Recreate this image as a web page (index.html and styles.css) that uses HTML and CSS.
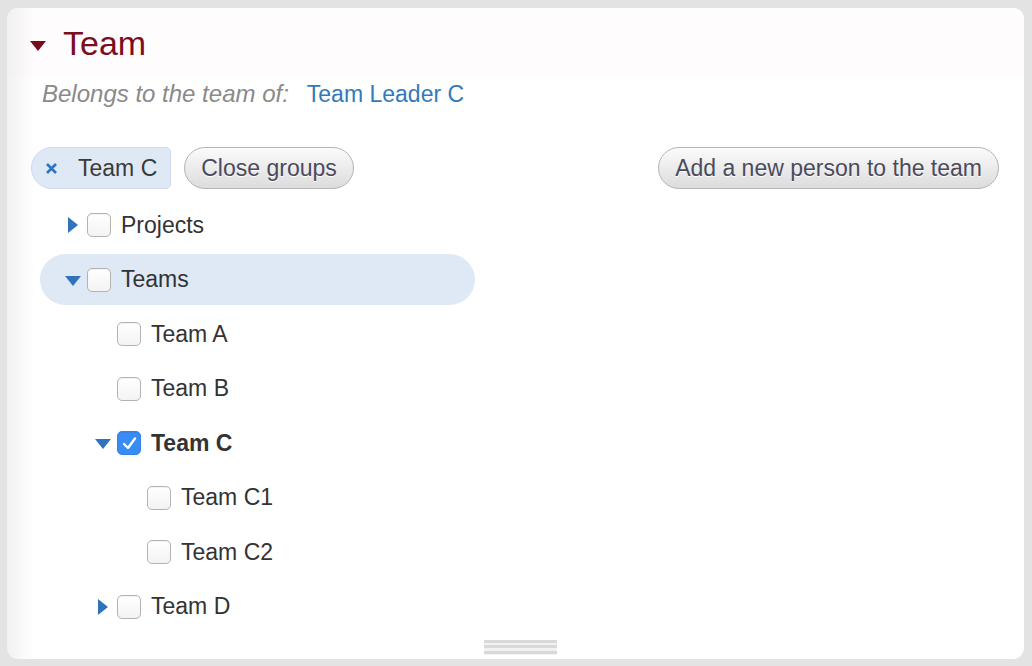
FILE: index.html
```html
<!DOCTYPE html>
<html>
<head>
<meta charset="utf-8">
<link rel="stylesheet" href="styles.css">
</head>
<body>
<div class="panel">
  <div class="header">
    <span class="tri-title"></span>
    <h1 class="title">Team</h1>
  </div>
  <div class="belongs">
    <span class="belongs-label">Belongs to the team of:</span>
    <a class="belongs-link">Team Leader C</a>
  </div>
  <div class="toolbar">
    <span class="tag">
      <svg class="tag-x" width="13" height="13" viewBox="0 0 13 13"><path d="M2 2 L11 11 M11 2 L2 11" stroke="#2f74c0" stroke-width="2.7" stroke-linecap="butt"/></svg>
      <span class="tag-text">Team C</span>
    </span>
    <button class="btn">Close groups</button>
    <span class="spacer"></span>
    <button class="btn">Add a new person to the team</button>
  </div>
  <div class="tree">
    <div class="row lvl0"><span class="slot"><span class="arr-right"></span></span><span class="cb"></span><span class="label">Projects</span></div>
    <div class="row lvl0 active"><span class="slot"><span class="arr-down"></span></span><span class="cb"></span><span class="label">Teams</span></div>
    <div class="row lvl1"><span class="slot"></span><span class="cb"></span><span class="label">Team A</span></div>
    <div class="row lvl1"><span class="slot"></span><span class="cb"></span><span class="label">Team B</span></div>
    <div class="row lvl1"><span class="slot"><span class="arr-down"></span></span><span class="cb checked"><svg width="17" height="15" viewBox="0 0 17 15"><path d="M3 8 L7 12 L14 2.5" fill="none" stroke="#fff" stroke-width="2.4" stroke-linecap="round" stroke-linejoin="round"/></svg></span><span class="label bold">Team C</span></div>
    <div class="row lvl2"><span class="slot"></span><span class="cb"></span><span class="label">Team C1</span></div>
    <div class="row lvl2"><span class="slot"></span><span class="cb"></span><span class="label">Team C2</span></div>
    <div class="row lvl1"><span class="slot"><span class="arr-right"></span></span><span class="cb"></span><span class="label">Team D</span></div>
  </div>
  <div class="grip"></div>
</div>
</body>
</html>
```
FILE: styles.css
```css
html, body {
  margin: 0;
  padding: 0;
}
body {
  background: #e3e3e3;
  width: 1032px;
  height: 666px;
  box-sizing: border-box;
  padding: 8px 8px 7px 7px;
  font-family: "Liberation Sans", Arial, sans-serif;
  color: #333;
}
.panel {
  height: 651px;
  border-radius: 11px;
  background:
    linear-gradient(to right, rgba(0,0,0,0.05), rgba(0,0,0,0) 28px),
    #fff;
  display: flex;
  flex-direction: column;
  overflow: hidden;
}
.header {
  height: 69px;
  box-sizing: border-box;
  padding: 16px 0 0 23px;
  display: flex;
  align-items: flex-start;
  background:
    linear-gradient(to right, rgba(0,0,0,0.05), rgba(0,0,0,0) 28px),
    #fffcfd;
}
.tri-title {
  width: 0;
  height: 0;
  border-left: 8.5px solid transparent;
  border-right: 8.5px solid transparent;
  border-top: 10px solid #7a0b1f;
  margin-top: 17px;
  margin-right: 17px;
}
.title {
  margin: 0;
  font-size: 34px;
  line-height: 38px;
  font-weight: normal;
  color: #7b0d21;
}
.belongs {
  padding: 3px 0 0 35px;
  display: flex;
  align-items: baseline;
  line-height: 28px;
}
.belongs-label {
  font-style: italic;
  font-size: 24px;
  color: #8a8a8a;
}
.belongs-link {
  margin-left: 18px;
  font-size: 23px;
  color: #337ab7;
}
.toolbar {
  margin-top: 39px;
  padding: 0 25px 0 24px;
  display: flex;
  align-items: center;
  height: 42px;
}
.spacer {
  flex: 1;
}
.tag {
  height: 42px;
  box-sizing: border-box;
  border: 1px solid #cfd7f6;
  background: #dfe9f6;
  border-radius: 21px 5px 5px 21px;
  display: flex;
  align-items: center;
  padding: 0 13px 0 13px;
  margin-right: 13px;
}
.tag-x {
  margin-right: 20px;
}
.tag-text {
  font-size: 23px;
  color: #3a3a3a;
}
.btn {
  height: 42px;
  box-sizing: border-box;
  border: 1px solid #b4b4b4;
  border-radius: 21px;
  background: linear-gradient(#fbfbfb, #dcdcdc);
  font-family: "Liberation Sans", Arial, sans-serif;
  font-size: 23px;
  color: #4a4a5c;
  text-shadow: 0 1px 0 #fff;
  padding: 0 16px;
  margin: 0;
}
.tree {
  margin-top: 10.5px;
  margin-left: 33px;
  width: 435px;
  display: flex;
  flex-direction: column;
}
.row {
  height: 51px;
  margin-bottom: 3.5px;
  display: flex;
  align-items: center;
  border-radius: 26px;
  font-size: 23px;
  color: #333;
}
.row.active {
  background: #dee9f5;
}
.lvl0 { padding-left: 23px; }
.lvl1 { padding-left: 53px; }
.lvl2 { padding-left: 83px; }
.slot {
  width: 20px;
  margin-right: 4px;
  display: flex;
  justify-content: center;
  align-items: center;
}
.arr-right {
  width: 0;
  height: 0;
  border-top: 8px solid transparent;
  border-bottom: 8px solid transparent;
  border-left: 10px solid #2f72be;
}
.arr-down {
  width: 0;
  height: 0;
  border-left: 8.5px solid transparent;
  border-right: 8.5px solid transparent;
  border-top: 10px solid #2f72be;
  margin-top: 2px;
}
.cb {
  width: 24px;
  height: 24px;
  box-sizing: border-box;
  border: 1px solid #b3b3b3;
  border-radius: 5px;
  background: linear-gradient(#ffffff, #f3f3f3);
  box-shadow: inset 0 1px 1px rgba(0,0,0,0.05);
  margin-right: 10px;
  display: flex;
  align-items: center;
  justify-content: center;
}
.cb.checked {
  background: #3a8cf5;
  border-color: #3282ec;
}
.label.bold {
  font-weight: bold;
}
.grip {
  margin-top: 4.5px;
  margin-left: 477px;
  width: 73px;
  height: 15px;
  background: repeating-linear-gradient(#d9d9d9 0 3px, #f2f2f2 3px 5.5px);
}
```
